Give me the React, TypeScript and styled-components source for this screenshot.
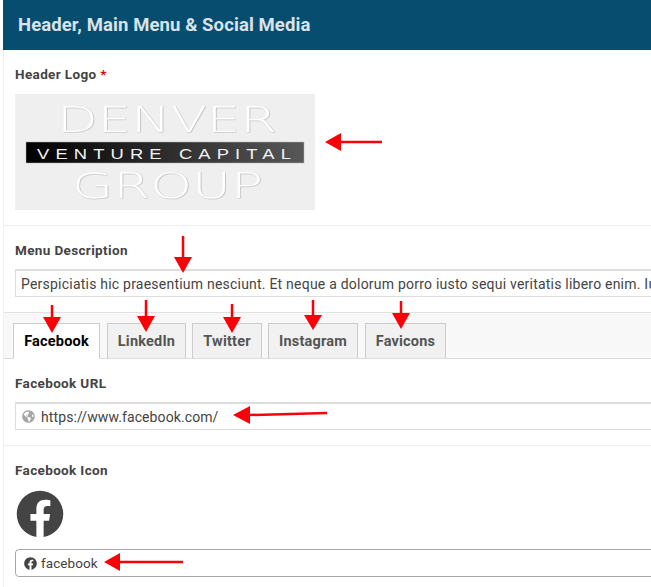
import React from "react";
import styled, { createGlobalStyle } from "styled-components";
import { FaFacebook, FaGlobeAmericas } from "react-icons/fa";

const GlobalStyle = createGlobalStyle`
  html, body {
    margin: 0;
    padding: 0;
    background: #fff;
    overflow: hidden;
  }
  body {
    width: 651px;
    height: 587px;
    font-family: Roboto, "Liberation Sans", sans-serif;
  }
`;

const Page = styled.div`
  position: relative;
  width: 651px;
  height: 587px;
  overflow: hidden;
  padding-left: 3px;
  box-sizing: border-box;
`;

const Panel = styled.div`
  width: 700px;
  border-left: 1px solid #eeeeee;
  box-sizing: border-box;
`;

const PanelHeader = styled.div`
  height: 50px;
  margin-left: -1px;
  padding-left: 15px;
  display: flex;
  align-items: center;
  background: #074d6f;
  color: #d9e3e9;
  font-size: 18.5px;
  font-weight: 700;
  letter-spacing: 0.1px;
`;

const Field = styled.div<{ $height: number; $divider?: boolean }>`
  height: ${(p) => p.$height}px;
  box-sizing: border-box;
  padding: 17px 0 0 11px;
  border-bottom: ${(p) => (p.$divider ? "1px solid #eeeeee" : "none")};
`;

const Label = styled.div`
  height: 15px;
  line-height: 15px;
  margin-bottom: 11px;
  font-size: 13.5px;
  font-weight: 700;
  letter-spacing: 0.36px;
  color: #444444;
`;

const Required = styled.span`
  color: #e00000;
`;

const LogoBox = styled.div`
  width: 300px;
  height: 116px;
  margin-top: 12px;
  background: #efefef;
`;

const TextRow = styled.div`
  height: 28px;
  box-sizing: border-box;
  display: flex;
  align-items: center;
  padding-left: 5px;
  border: 1px solid #dddddd;
  border-top-width: 2px;
  background: #fff;
  color: #444444;
  font-size: 14px;
  letter-spacing: 0.22px;
  white-space: nowrap;
  overflow: hidden;
`;

const UrlRow = styled(TextRow)`
  gap: 6px;
  padding-left: 6px;
  letter-spacing: 0.1px;
`;

const SelectRow = styled(TextRow)`
  gap: 4px;
  padding-left: 8px;
  border: 1px solid #a8a8a8;
  border-radius: 4px;
  font-size: 13.5px;
  letter-spacing: 0.08px;
`;

const TabBar = styled.div`
  height: 47px;
  box-sizing: border-box;
  display: flex;
  align-items: flex-end;
  gap: 6px;
  padding-left: 9px;
  background: #f8f8f8;
  border-top: 1px solid #e1e1e1;
  border-bottom: 1px solid #dddddd;
`;

const Tab = styled.div<{ $active?: boolean; $width: number; $extraGap?: boolean }>`
  width: ${(p) => p.$width}px;
  height: 36px;
  box-sizing: border-box;
  display: flex;
  align-items: center;
  justify-content: center;
  margin-bottom: -1px;
  margin-right: ${(p) => (p.$extraGap ? 1 : 0)}px;
  border: 1px solid #cccccc;
  border-bottom-color: ${(p) => (p.$active ? "#fff" : "#dddddd")};
  background: ${(p) => (p.$active ? "#fff" : "#f1f1f1")};
  color: ${(p) => (p.$active ? "#000" : "#555555")};
  font-size: 14.5px;
  font-weight: 700;
  letter-spacing: 0.2px;
`;

const BigIcon = styled.div`
  height: 48px;
  margin: 12px 0 11px 1px;
  color: #444444;
  font-size: 48px;
  line-height: 0;
`;

const GlobeGlyph = styled(FaGlobeAmericas)`
  flex: none;
  width: 13px;
  height: 13px;
  color: #a6a6a6;
`;

const SmallGlyph = styled(FaFacebook)`
  flex: none;
  width: 13px;
  height: 13px;
  color: #444444;
`;

const ArrowLayer = styled.svg`
  position: absolute;
  top: 0;
  left: 0;
  pointer-events: none;
`;

const tabs = [
  { label: "Facebook", width: 87, active: true, extraGap: true },
  { label: "LinkedIn", width: 79 },
  { label: "Twitter", width: 70 },
  { label: "Instagram", width: 90, extraGap: true },
  { label: "Favicons", width: 81 },
];

// x1,y1 = tail, x2,y2 = tip, base = where the head starts
const arrows = [
  { x1: 382, y1: 142, x2: 325, y2: 142, base: 341 },
  { x1: 183, y1: 236, x2: 183, y2: 273, base: 257 },
  { x1: 52, y1: 305, x2: 52, y2: 333, base: 317 },
  { x1: 146, y1: 300, x2: 146, y2: 332, base: 316 },
  { x1: 232, y1: 304, x2: 232, y2: 333, base: 317 },
  { x1: 313, y1: 300, x2: 313, y2: 330, base: 315 },
  { x1: 401, y1: 301, x2: 401, y2: 329, base: 313 },
  { x1: 327, y1: 413, x2: 233, y2: 415, base: 250 },
  { x1: 183, y1: 562, x2: 104, y2: 562, base: 120 },
];

function Arrow(a: { x1: number; y1: number; x2: number; y2: number; base: number }) {
  const vertical = a.x1 === a.x2;
  const head = vertical
    ? `${a.x2},${a.y2} ${a.x2 - 9},${a.base} ${a.x2 + 9},${a.base}`
    : `${a.x2},${a.y2} ${a.base},${a.y2 - 9} ${a.base},${a.y2 + 9}`;
  return (
    <g>
      <line x1={a.x1} y1={a.y1} x2={vertical ? a.x2 : a.base} y2={vertical ? a.base : a.y2} stroke="#fb0007" strokeWidth={2.5} />
      <polygon points={head} fill="#fb0007" />
    </g>
  );
}

function Logo() {
  const hollow = {
    fontFamily: "'DejaVu Sans', sans-serif",
    fontWeight: 200,
    fontSize: 36,
    fill: "#ffffff",
    lengthAdjust: "spacingAndGlyphs" as const,
  };
  return (
    <svg width={300} height={116} viewBox="0 0 300 116">
      <defs>
        <linearGradient id="band" x1="0" x2="1" y1="0" y2="0">
          <stop offset="0" stopColor="#000000" />
          <stop offset="1" stopColor="#585858" />
        </linearGradient>
        <filter id="edge" x="-5%" y="-5%" width="110%" height="110%">
          <feDropShadow dx="0.6" dy="0.4" stdDeviation="0.4" floodColor="#8a8a8a" floodOpacity="0.7" />
        </filter>
      </defs>
      <text x={42} y={38} textLength={220} filter="url(#edge)" {...hollow}>
        DENVER
      </text>
      <rect x={11} y={48} width={278} height={21} fill="url(#band)" stroke="#b5b5b5" strokeWidth={0.5} />
      <text
        x={22}
        y={65}
        textLength={260}
        fontFamily="'Liberation Sans', sans-serif"
        fontSize={15}
        letterSpacing={5}
        fill="#f2f2f2"
        lengthAdjust="spacingAndGlyphs"
      >
        VENTURE CAPITAL
      </text>
      <text x={57} y={104} textLength={191} filter="url(#edge)" {...hollow}>
        GROUP
      </text>
    </svg>
  );
}

export default function App() {
  return (
    <Page>
      <GlobalStyle />
      <Panel>
        <PanelHeader>Header, Main Menu &amp; Social Media</PanelHeader>
        <Field $height={176} $divider>
          <Label>
            Header Logo <Required>*</Required>
          </Label>
          <LogoBox>
            <Logo />
          </LogoBox>
        </Field>
        <Field $height={86}>
          <Label>Menu Description</Label>
          <TextRow>
            Perspiciatis hic praesentium nesciunt. Et neque a dolorum porro iusto sequi veritatis libero enim. Iusto quia
          </TextRow>
        </Field>
        <TabBar>
          {tabs.map((t) => (
            <Tab key={t.label} $active={t.active} $width={t.width} $extraGap={t.extraGap}>
              {t.label}
            </Tab>
          ))}
        </TabBar>
        <Field $height={87} $divider>
          <Label>Facebook URL</Label>
          <UrlRow>
            <GlobeGlyph />
            https://www.facebook.com/
          </UrlRow>
        </Field>
        <Field $height={141}>
          <Label>Facebook Icon</Label>
          <BigIcon>
            <FaFacebook />
          </BigIcon>
          <SelectRow>
            <SmallGlyph />
            facebook
          </SelectRow>
        </Field>
      </Panel>
      <ArrowLayer width={651} height={587} viewBox="0 0 651 587">
        {arrows.map((a, i) => (
          <Arrow key={i} {...a} />
        ))}
      </ArrowLayer>
    </Page>
  );
}
